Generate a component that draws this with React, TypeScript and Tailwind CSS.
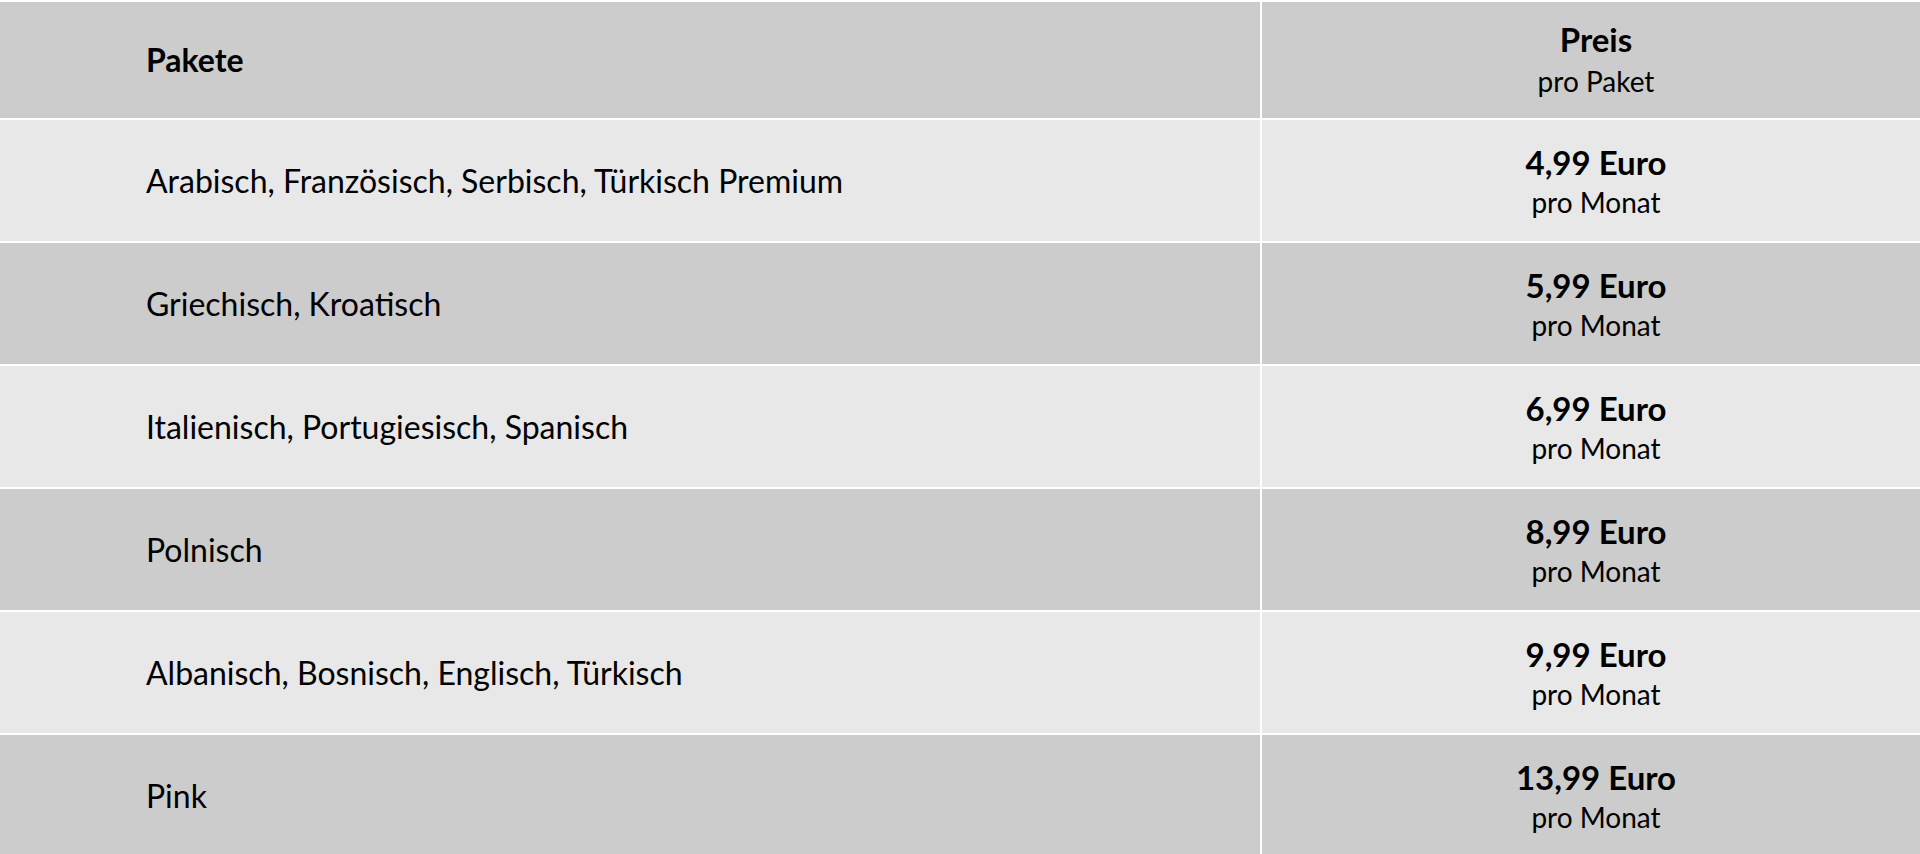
import React from "react";

const rows = [
  { name: "Arabisch, Französisch, Serbisch, Türkisch Premium", price: "4,99 Euro" },
  { name: "Griechisch, Kroatisch", price: "5,99 Euro" },
  { name: "Italienisch, Portugiesisch, Spanisch", price: "6,99 Euro" },
  { name: "Polnisch", price: "8,99 Euro" },
  { name: "Albanisch, Bosnisch, Englisch, Türkisch", price: "9,99 Euro" },
  { name: "Pink", price: "13,99 Euro" },
];

export default function App() {
  return (
    <div className="h-[854px] w-[1920px] overflow-hidden bg-white pt-[2px] font-[family-name:Lato,sans-serif] text-black">
      <div className="flex h-[116px] bg-[#cccccc]">
        <div className="flex w-[1260px] items-center pl-[146px] text-[32px] font-bold">Pakete</div>
        <div className="w-[2px] bg-white" />
        <div className="flex flex-1 flex-col items-center justify-center pl-[10px] leading-[42px]">
          <div className="text-[33px] font-bold">Preis</div>
          <div className="text-[28px]">pro Paket</div>
        </div>
      </div>
      {rows.map((r, i) => {
        const bg = i % 2 === 0 ? "bg-[#e8e8e8]" : "bg-[#cccccc]";
        return (
          <div key={r.name} className="mt-[2px] flex h-[121px]">
            <div className={`flex w-[1260px] items-center pl-[146px] text-[32px] ${bg}`}>{r.name}</div>
            <div className="w-[2px] bg-white" />
            <div className={`flex flex-1 flex-col items-center justify-center pl-[10px] pt-[2px] leading-[40px] ${bg}`}>
              <div className="text-[33px] font-bold">{r.price}</div>
              <div className="text-[28px]">pro Monat</div>
            </div>
          </div>
        );
      })}
    </div>
  );
}
